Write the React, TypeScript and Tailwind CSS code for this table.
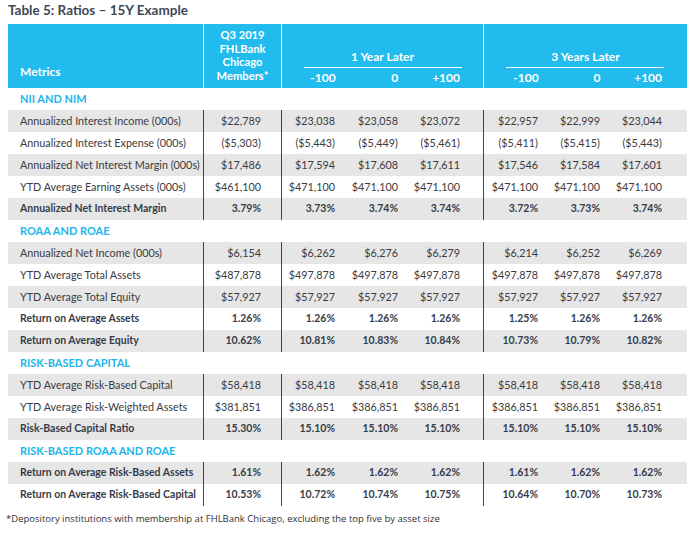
const cols = "grid grid-cols-[195px_78px_60px_63px_79px_61px_62px_81px]";

type Row = { label: string; values: string[]; bold?: boolean };
type Section = { title: string; rows: Row[] };

const sections: Section[] = [
  {
    title: "NII AND NIM",
    rows: [
      { label: "Annualized Interest Income (000s)", values: ["$22,789", "$23,038", "$23,058", "$23,072", "$22,957", "$22,999", "$23,044"] },
      { label: "Annualized Interest Expense (000s)", values: ["($5,303)", "($5,443)", "($5,449)", "($5,461)", "($5,411)", "($5,415)", "($5,443)"] },
      { label: "Annualized Net Interest Margin (000s)", values: ["$17,486", "$17,594", "$17,608", "$17,611", "$17,546", "$17,584", "$17,601"] },
      { label: "YTD Average Earning Assets (000s)", values: ["$461,100", "$471,100", "$471,100", "$471,100", "$471,100", "$471,100", "$471,100"] },
      { label: "Annualized Net Interest Margin", values: ["3.79%", "3.73%", "3.74%", "3.74%", "3.72%", "3.73%", "3.74%"], bold: true },
    ],
  },
  {
    title: "ROAA AND ROAE",
    rows: [
      { label: "Annualized Net Income (000s)", values: ["$6,154", "$6,262", "$6,276", "$6,279", "$6,214", "$6,252", "$6,269"] },
      { label: "YTD Average Total Assets", values: ["$487,878", "$497,878", "$497,878", "$497,878", "$497,878", "$497,878", "$497,878"] },
      { label: "YTD Average Total Equity", values: ["$57,927", "$57,927", "$57,927", "$57,927", "$57,927", "$57,927", "$57,927"] },
      { label: "Return on Average Assets", values: ["1.26%", "1.26%", "1.26%", "1.26%", "1.25%", "1.26%", "1.26%"], bold: true },
      { label: "Return on Average Equity", values: ["10.62%", "10.81%", "10.83%", "10.84%", "10.73%", "10.79%", "10.82%"], bold: true },
    ],
  },
  {
    title: "RISK-BASED CAPITAL",
    rows: [
      { label: "YTD Average Risk-Based Capital", values: ["$58,418", "$58,418", "$58,418", "$58,418", "$58,418", "$58,418", "$58,418"] },
      { label: "YTD Average Risk-Weighted Assets", values: ["$381,851", "$386,851", "$386,851", "$386,851", "$386,851", "$386,851", "$386,851"] },
      { label: "Risk-Based Capital Ratio", values: ["15.30%", "15.10%", "15.10%", "15.10%", "15.10%", "15.10%", "15.10%"], bold: true },
    ],
  },
  {
    title: "RISK-BASED ROAA AND ROAE",
    rows: [
      { label: "Return on Average Risk-Based Assets", values: ["1.61%", "1.62%", "1.62%", "1.62%", "1.61%", "1.62%", "1.62%"], bold: true },
      { label: "Return on Average Risk-Based Capital", values: ["10.53%", "10.72%", "10.74%", "10.75%", "10.64%", "10.70%", "10.73%"], bold: true },
    ],
  },
];

// padding + divider per value column (Q3, 1Y x3, 3Y x3)
const valueCell = [
  "pr-[20px] border-l border-[#3d4555]",
  "pr-[6px] border-l border-[#3d4555]",
  "pr-[6px]",
  "pr-[23px]",
  "pr-[6px] border-l border-[#3d4555]",
  "pr-[6px]",
  "pr-[25px]",
];

function DataRow({ row, shaded }: { row: Row; shaded: boolean }) {
  const tone = row.bold ? "font-bold text-[#363d4a] text-[10.5px]" : "text-[#3b3b40] text-[10.8px]";
  return (
    <div className={`${cols} h-[22px] ${shaded ? "bg-[#e6e6e6]" : "bg-white"} ${tone}`}>
      <div className="flex items-center pl-[12px] whitespace-nowrap">{row.label}</div>
      {row.values.map((v, i) => (
        <div key={i} className={`flex items-center justify-end ${valueCell[i]}`}>
          {v}
        </div>
      ))}
    </div>
  );
}

function GroupHeader({ title, right }: { title: string; right: string }) {
  const sub = right === "1y" ? ["pr-[6px] w-[60px]", "pr-[6px] w-[63px]", "pr-[23px] w-[79px]"] : ["pr-[6px] w-[61px]", "pr-[6px] w-[62px]", "pr-[25px] w-[81px]"];
  return (
    <div className="flex flex-col justify-end border-l border-white h-full">
      <div className="text-center leading-[14px]">{title}</div>
      <div className={`h-px bg-white mt-[3px] ml-[22px] ${right === "1y" ? "mr-[21px]" : "mr-[23px]"}`} />
      <div className="flex h-[20px] items-center">
        {["-100", "0", "+100"].map((l, i) => (
          <div key={l} className={`text-right ${sub[i]}`}>
            {l}
          </div>
        ))}
      </div>
    </div>
  );
}

export default function App() {
  return (
    <div className="w-[696px] h-[537px] bg-white font-['Lato',sans-serif] text-[11px]">
      <div className="h-[24px] pl-[8px] pt-[1px] text-[13.5px] font-bold text-[#3c4858] leading-[18px]">
        Table 5: Ratios – 15Y Example
      </div>

      <div className="ml-[8px] w-[679px]">
        <div className="flex h-[64px] bg-[#22bbed] text-white font-bold text-[12px]">
          <div className="w-[195px] flex items-end pl-[12px] pb-[7px]">Metrics</div>
          <div className="w-[78px] flex flex-col justify-end items-center border-l border-white pb-[6px] text-[11.2px] leading-[13.5px] text-center">
            <div>Q3 2019</div>
            <div>FHLBank</div>
            <div>Chicago</div>
            <div>Members*</div>
          </div>
          <div className="w-[202px]">
            <GroupHeader title="1 Year Later" right="1y" />
          </div>
          <div className="w-[204px]">
            <GroupHeader title="3 Years Later" right="3y" />
          </div>
        </div>

        {sections.map((s) => (
          <div key={s.title}>
            <div className="h-[22px] flex items-center pl-[12px] font-bold text-[#22b5ea] text-[11px]">{s.title}</div>
            {s.rows.map((r, i) => (
              <DataRow key={r.label} row={r} shaded={i % 2 === 0} />
            ))}
          </div>
        ))}
      </div>

      <div className="pl-[6px] pt-[6px] text-[9.5px] text-[#2f2f33] font-['Open_Sans',sans-serif]">
        *Depository institutions with membership at FHLBank Chicago, excluding the top five by asset size
      </div>
    </div>
  );
}
